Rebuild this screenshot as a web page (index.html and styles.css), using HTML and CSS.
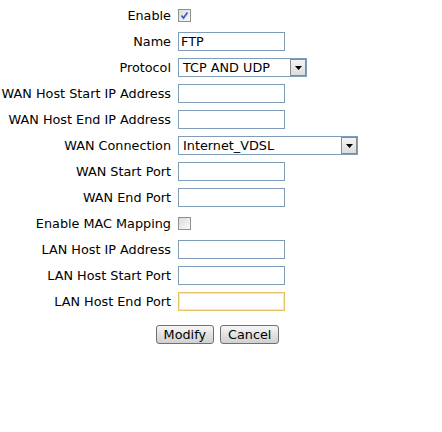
FILE: index.html
```html
<!DOCTYPE html>
<html lang="en">
<head>
    <meta charset="UTF-8">
    <title>Port Mapping</title>
    <link rel="stylesheet" href="styles.css">
</head>
<body>
    <form class="mapping">
        <div class="grid">
            <label>Enable</label>
            <span class="check checked">
                <svg width="11" height="11" viewBox="0 0 11 11"><path d="M2.5 5.5 L4.5 8 L8.5 2.5" fill="none" stroke="#3a62c4" stroke-width="1.8"/></svg>
            </span>

            <label>Name</label>
            <span class="field">FTP</span>

            <label>Protocol</label>
            <span class="select">
                <span class="value">TCP AND UDP</span>
                <span class="arrow"><svg width="7" height="4" viewBox="0 0 7 4"><path d="M0 0 H7 L3.5 4 Z" fill="#000"/></svg></span>
            </span>

            <label>WAN Host Start IP Address</label>
            <span class="field"></span>

            <label>WAN Host End IP Address</label>
            <span class="field"></span>

            <label>WAN Connection</label>
            <span class="select wide">
                <span class="value">Internet_VDSL</span>
                <span class="arrow"><svg width="7" height="4" viewBox="0 0 7 4"><path d="M0 0 H7 L3.5 4 Z" fill="#000"/></svg></span>
            </span>

            <label>WAN Start Port</label>
            <span class="field"></span>

            <label>WAN End Port</label>
            <span class="field"></span>

            <label>Enable MAC Mapping</label>
            <span class="check"></span>

            <label>LAN Host IP Address</label>
            <span class="field"></span>

            <label>LAN Host Start Port</label>
            <span class="field"></span>

            <label>LAN Host End Port</label>
            <span class="field focused"></span>
        </div>
        <div class="buttons">
            <button type="button">Modify</button>
            <button type="button">Cancel</button>
        </div>
    </form>
</body>
</html>
```

FILE: styles.css
```css
body {
    margin: 0;
    background: #fff;
    color: #000;
    font-family: "DejaVu Sans", Verdana, sans-serif;
    font-size: 12.8px;
}

.mapping {
    width: 435px;
    padding-top: 6px;
}

.grid {
    display: grid;
    grid-template-columns: 171px auto;
    column-gap: 7px;
    row-gap: 7px;
    grid-auto-rows: 19px;
    align-items: center;
}

.grid label {
    text-align: right;
    white-space: nowrap;
}

.field {
    box-sizing: border-box;
    width: 107px;
    height: 19px;
    border: 1px solid #7f9db9;
    padding: 1px 2px;
    line-height: 15px;
}

.field.focused {
    border-color: #e5c365;
    box-shadow: inset 0 0 0 1px #f8e8b8;
}

.select {
    box-sizing: border-box;
    width: 129px;
    height: 19px;
    border: 1px solid #7f9db9;
    display: flex;
    align-items: center;
    justify-content: space-between;
}

.select.wide {
    width: 180px;
}

.select .value {
    padding-left: 4px;
}

.select .arrow {
    box-sizing: border-box;
    width: 16px;
    height: 17px;
    background: linear-gradient(#f4f4f4, #dcdcdc);
    border: 1px solid #8a8a8a;
    display: flex;
    align-items: center;
    justify-content: center;
}

.check {
    box-sizing: border-box;
    width: 13px;
    height: 13px;
    border: 1px solid #8f8f8f;
    background: linear-gradient(135deg, #dcdcdc, #f8f8f8);
    display: flex;
    align-items: center;
    justify-content: center;
}

.buttons {
    display: flex;
    justify-content: center;
    gap: 6px;
    margin-top: 14px;
}

.buttons button {
    font-family: inherit;
    font-size: 12.8px;
    height: 19px;
    padding: 0 7px;
    border: 1px solid #707070;
    border-radius: 3px;
    background: linear-gradient(#f6f6f6, #e2e2e2 50%, #d0d0d0);
    color: #000;
    line-height: 15px;
}
```
